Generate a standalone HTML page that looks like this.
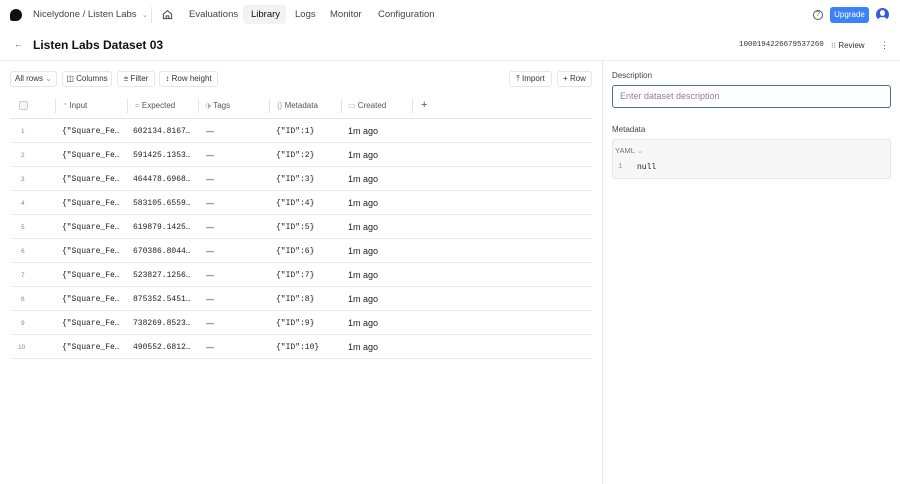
<!DOCTYPE html>
<html><head><meta charset="utf-8"><style>
*{box-sizing:border-box;margin:0;padding:0}
body{width:900px;height:484px;background:#fff;font-family:"Liberation Sans",sans-serif;color:#222;position:relative;overflow:hidden;font-size:9px}
.a{position:absolute;white-space:nowrap}
.nav span{position:absolute;top:9px;font-size:9.5px;color:#444;white-space:nowrap}
.btn{position:absolute;top:71px;height:16px;border:1px solid #e6e6e6;border-radius:3px;font-size:8px;color:#333;line-height:14px;text-align:center;background:#fff;white-space:nowrap;overflow:hidden}
.mono{font-family:"Liberation Mono",monospace}
.row{position:absolute;left:10px;width:582px;height:24px;border-bottom:1px solid #ececec}
.row span{position:absolute;top:8px;font-size:8px;white-space:nowrap}
.hd span{position:absolute;top:101px;font-size:8px;color:#555;white-space:nowrap}
.vl{position:absolute;top:99px;width:1px;height:14px;background:#e3e3e3}
</style></head><body>
<div class="a" style="left:10px;top:9px;width:12px;height:12px;border-radius:50% 50% 50% 20%;background:#111"></div>
<div class="nav">
<span style="left:33px">Nicelydone / Listen Labs <span style="position:static;color:#999;font-size:7px;margin-left:3px">⌄</span></span>
<div class="a" style="left:151px;top:7px;width:1px;height:16px;background:#e5e5e5"></div>
<svg class="a" style="left:162px;top:9px" width="11" height="11" viewBox="0 0 12 12" fill="none" stroke="#444" stroke-width="1.1"><path d="M1.5 5.5L6 1.8l4.5 3.7V10.5H1.5z M4.5 10.5V7.5h3v3"/></svg>
<span style="left:189px">Evaluations</span>
<div class="a" style="left:243px;top:5px;width:43px;height:19px;background:#f2f2f2;border-radius:4px"></div>
<span style="left:251px;color:#111">Library</span>
<span style="left:295px">Logs</span>
<span style="left:330px">Monitor</span>
<span style="left:378px">Configuration</span>
</div>
<div class="a" style="left:813px;top:10px;width:10px;height:10px;border:1px solid #555;border-radius:50%;font-size:7px;text-align:center;line-height:8px;color:#555">?</div>
<div class="a" style="left:830px;top:7px;width:39px;height:16px;background:#3b82f6;border-radius:3px;color:#fff;font-size:8px;text-align:center;line-height:16px">Upgrade</div>
<div class="a" style="left:876px;top:8px;width:13px;height:13px;border-radius:50%;background:#3b5bd6;overflow:hidden"><div class="a" style="left:4px;top:2px;width:5px;height:6px;border-radius:50%;background:#fff"></div><div class="a" style="left:2px;top:9px;width:9px;height:6px;border-radius:50%;background:#fff"></div></div>

<div class="a" style="left:14px;top:39px;font-size:9px;color:#555">←</div>
<div class="a" style="left:33px;top:38px;font-size:12px;font-weight:bold;color:#111">Listen Labs Dataset 03</div>
<div class="a mono" style="left:739px;top:41px;font-size:7.6px;color:#333;letter-spacing:-0.1px">1000194226679537260</div>
<div class="a" style="left:831px;top:41px;font-size:8px;color:#333"><span style="color:#777">⁝⁝</span> Review</div>
<div class="a" style="left:880px;top:40px;font-size:9px;color:#555">⋮</div>
<div class="a" style="left:0;top:60px;width:900px;height:1px;background:#ececec"></div>
<div class="a" style="left:602px;top:61px;width:1px;height:423px;background:#e6e6e6"></div>

<div class="btn" style="left:10px;width:47px">All rows <span style="color:#999">⌄</span></div>
<div class="btn" style="left:62px;width:50px">◫ Columns</div>
<div class="btn" style="left:117px;width:38px">⩧ Filter</div>
<div class="btn" style="left:159px;width:59px">↕ Row height</div>
<div class="btn" style="left:509px;width:43px">⤒ Import</div>
<div class="btn" style="left:557px;width:35px">+ Row</div>

<div class="a" style="left:10px;top:118px;width:582px;height:1px;background:#e3e3e3"></div>
<div class="a" style="left:19px;top:101px;width:9px;height:9px;border:1px solid #ccc;border-radius:2px;background:#f4f4f4"></div>
<div class="hd">
<div class="vl" style="left:55px"></div><span style="left:63px"><span style="position:static;color:#aaa">⁼</span> Input</span>
<div class="vl" style="left:127px"></div><span style="left:135px"><span style="position:static;color:#aaa">=</span> Expected</span>
<div class="vl" style="left:198px"></div><span style="left:205px"><span style="position:static;color:#aaa">⬗</span> Tags</span>
<div class="vl" style="left:269px"></div><span style="left:277px"><span style="position:static;color:#aaa">{}</span> Metadata</span>
<div class="vl" style="left:341px"></div><span style="left:348px"><span style="position:static;color:#aaa">▭</span> Created</span>
<div class="vl" style="left:412px"></div><span style="left:421px;font-size:11px;top:99px">+</span>
</div>

<div id="rows"></div>
<script>
var e=["602134.8167…","591425.1353…","464478.6968…","583105.6559…","619879.1425…","670386.8044…","523827.1256…","875352.5451…","738269.8523…","490552.6812…"],h="";
for(var i=0;i<10;i++){h+='<div class="row" style="top:'+(119+i*24)+'px"><span style="left:'+(i<9?11:8)+'px;font-size:6.5px;color:#888;top:9px">'+(i+1)+'</span><span class="mono" style="left:52px">{"Square_Fe…</span><span class="mono" style="left:123px">'+e[i]+'</span><span style="left:196px">—</span><span class="mono" style="left:266px">{"ID":'+(i+1)+'}</span><span style="left:338px;font-size:9px;top:7px">1m ago</span></div>'}
document.getElementById("rows").innerHTML=h;
</script>

<div class="a" style="left:612px;top:71px;font-size:8px;color:#444">Description</div>
<div class="a" style="left:612px;top:85px;width:279px;height:23px;border:1.5px solid #4a6fb5;border-radius:3px;font-size:9px;color:#888;padding:5px 7px">Enter dataset description</div>
<div class="a" style="left:612px;top:125px;font-size:8px;color:#444">Metadata</div>
<div class="a" style="left:612px;top:139px;width:279px;height:40px;border:1px solid #e6e6e6;border-radius:3px;background:#f7f7f7"></div>
<div class="a" style="left:615px;top:146px;font-size:7.5px;color:#777">YAML <span style="color:#aaa">⌄</span></div>
<div class="a mono" style="left:618px;top:163px;font-size:7.5px;color:#999">1</div>
<div class="a mono" style="left:637px;top:163px;font-size:8px;color:#222">null</div>
</body></html>
